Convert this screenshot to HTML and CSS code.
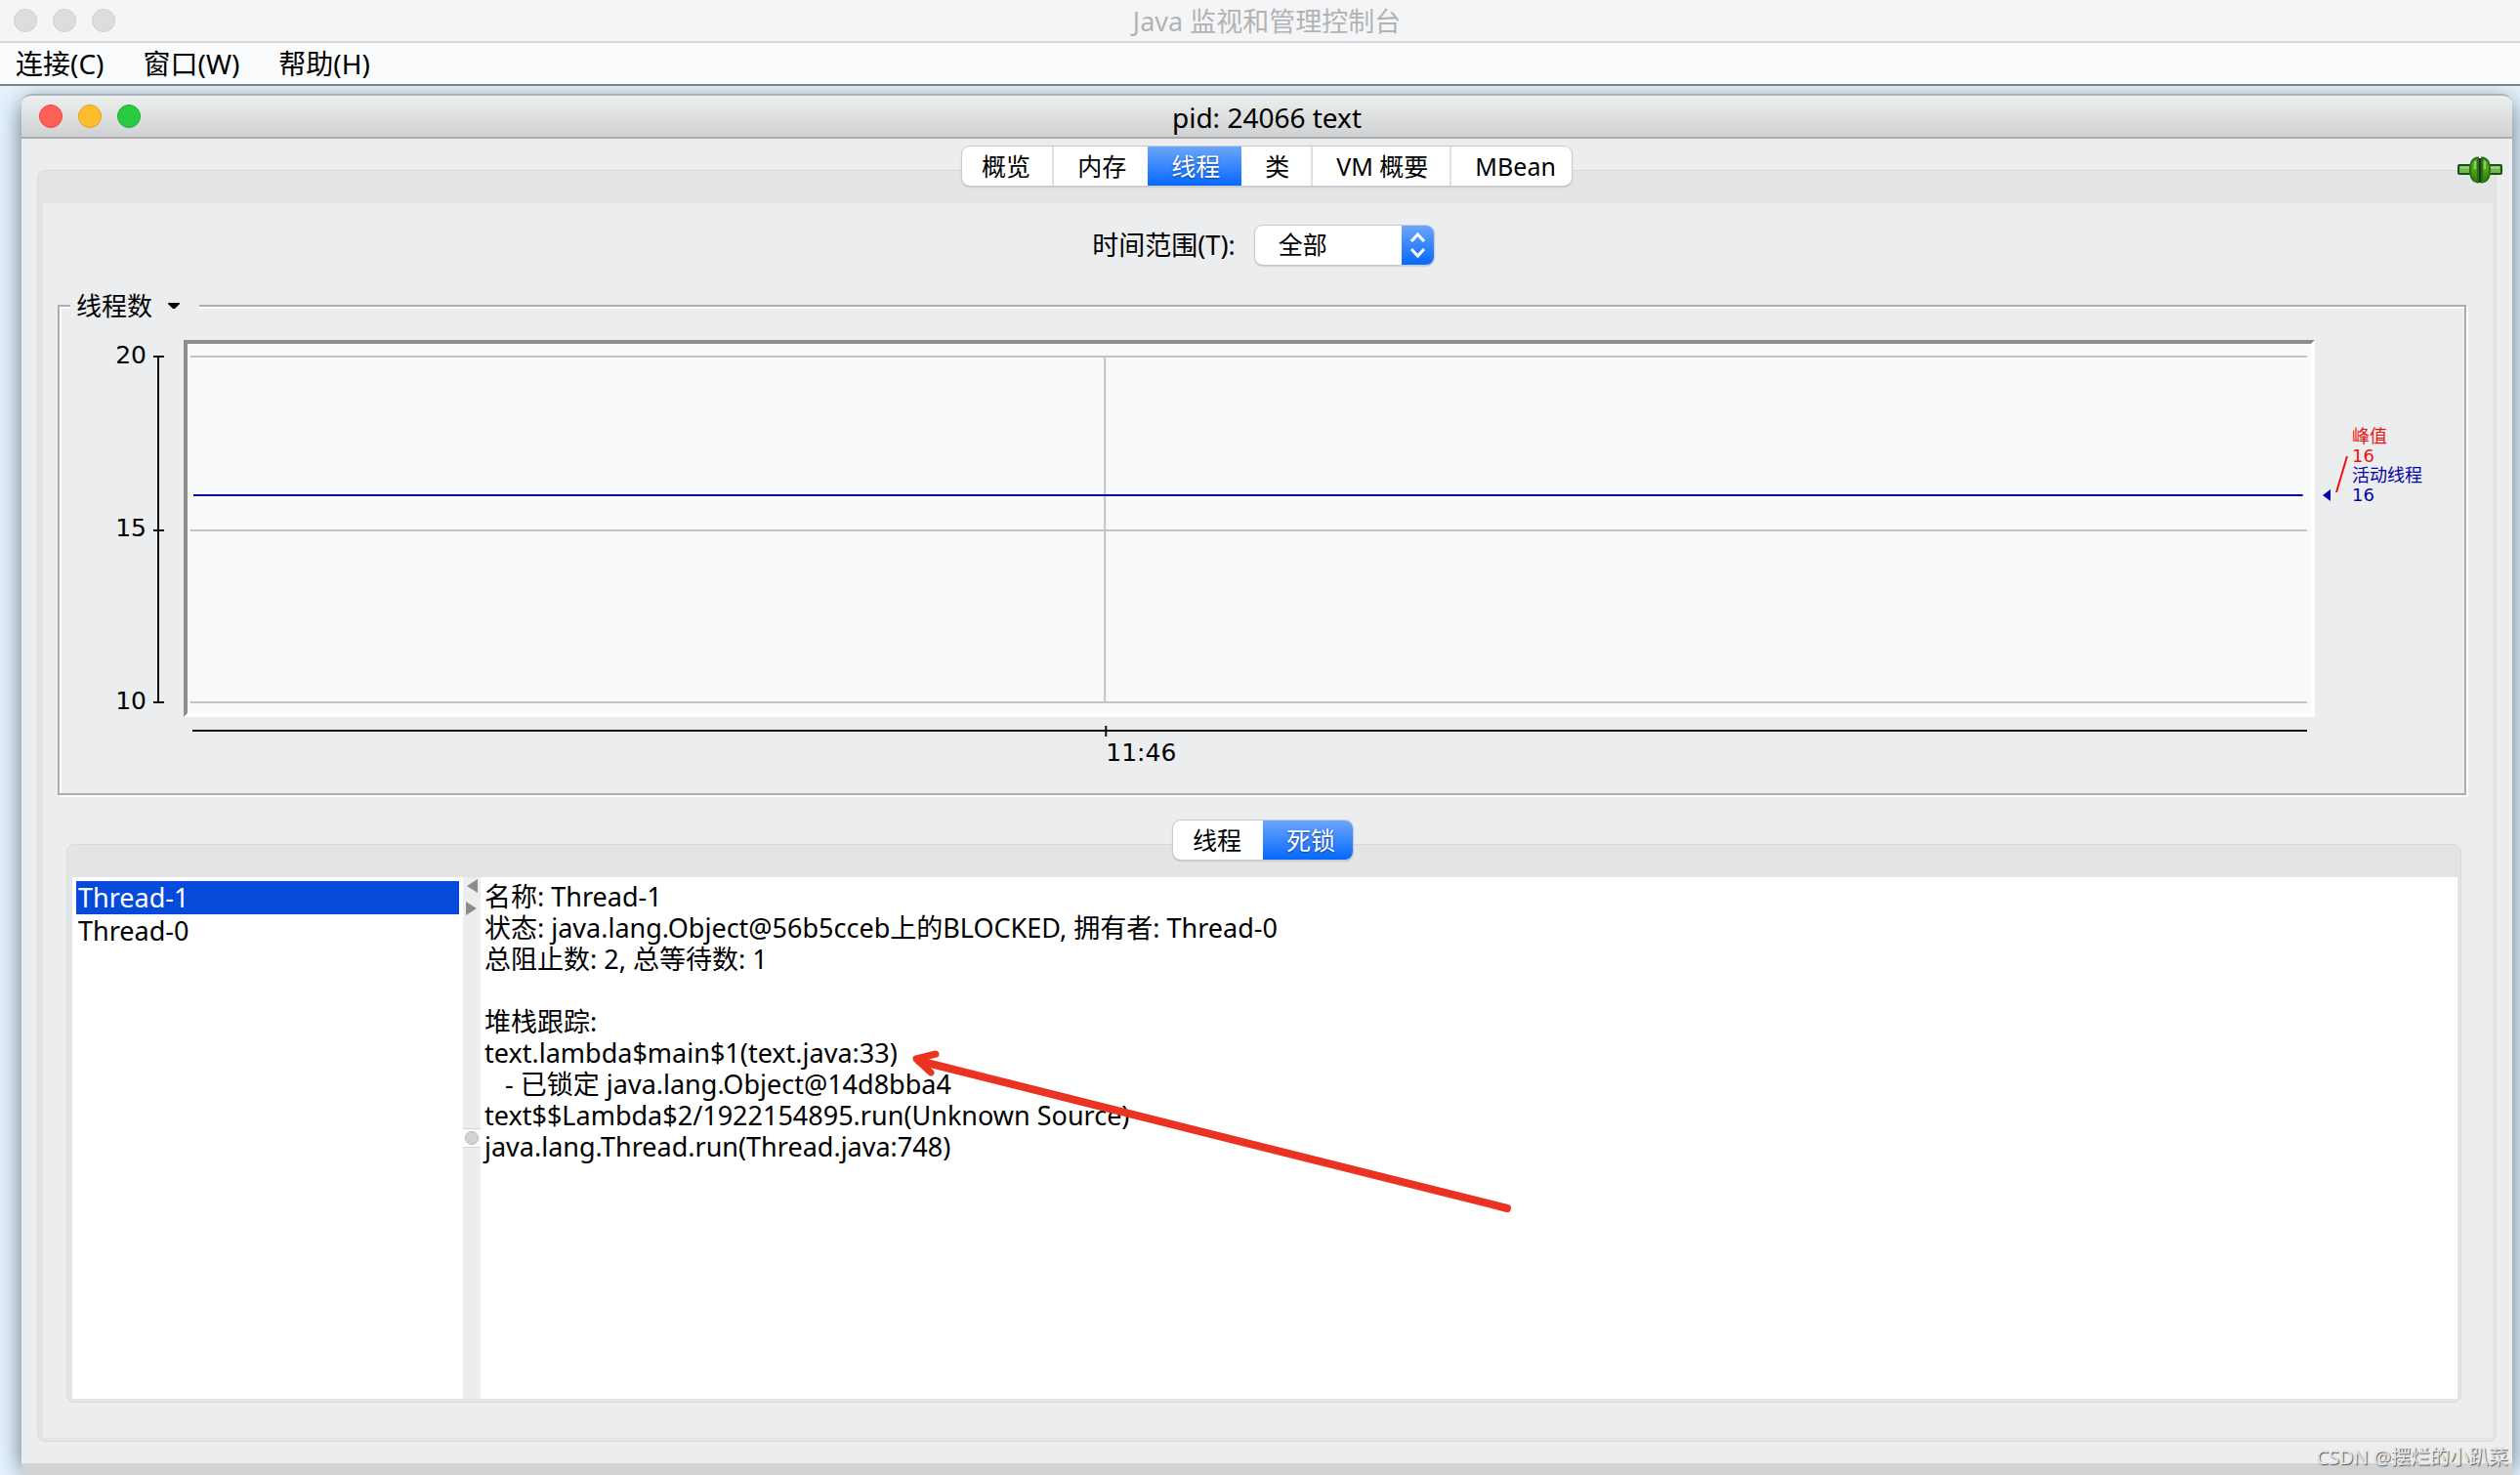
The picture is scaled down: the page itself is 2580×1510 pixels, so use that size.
FILE: index.html
```html
<!DOCTYPE html>
<html lang="zh-CN">
<head>
<meta charset="utf-8">
<meta name="viewport" content="width=device-width, initial-scale=1">
<title>Java 监视和管理控制台</title>
<link rel="stylesheet" href="styles.css">
</head>
<body>
<header class="app-title">
  <div class="lights">
    <span class="light"></span><span class="light"></span><span class="light"></span>
  </div>
  <h1 class="app-name">Java 监视和管理控制台</h1>
</header>
<nav class="menubar">
  <button class="menu" type="button">连接(C)</button>
  <button class="menu" type="button">窗口(W)</button>
  <button class="menu" type="button">帮助(H)</button>
</nav>
<main class="desktop">
  <section class="window">
    <header class="window-title">
      <div class="lights">
        <span class="light light-close"></span><span class="light light-min"></span><span class="light light-max"></span>
      </div>
      <h2 class="window-name">pid: 24066 text</h2>
    </header>
    <div class="window-body">
      <svg class="plug" width="46" height="28" viewBox="0 0 46 28" aria-label="已连接">
        <defs>
          <linearGradient id="plugFill" x1="0" y1="0" x2="0" y2="1">
            <stop offset="0" stop-color="#5fa83a"/><stop offset="0.5" stop-color="#4da513"/><stop offset="1" stop-color="#2e7a10"/>
          </linearGradient>
        </defs>
        <rect x="1" y="9" width="13" height="9" rx="1" fill="#6fb84e" stroke="#17530c" stroke-width="2"/>
        <rect x="32" y="9" width="13" height="9" rx="1" fill="#6fb84e" stroke="#17530c" stroke-width="2"/>
        <path d="M3 11.500H13M33 11.500H43" stroke="#a4d58c" stroke-width="2"/>
        <path d="M21 1.500C15 2 13 6 13 13.500S15 26 21 26.500Z" fill="url(#plugFill)" stroke="#2c6e1b" stroke-width="2"/>
        <path d="M25 1.500C31 2 33 6 33 13.500S31 26 25 26.500Z" fill="url(#plugFill)" stroke="#2c6e1b" stroke-width="2"/>
        <path d="M23 2V27" stroke="#123f0a" stroke-width="2"/>
        <path d="M18 5V13M28 5V13" stroke="#8fcb6a" stroke-width="2"/>
      </svg>
      <div class="tabs" role="tablist">
        <button class="tab tab-overview" type="button" role="tab">概览</button>
        <button class="tab" type="button" role="tab">内存</button>
        <button class="tab tab-on" type="button" role="tab" aria-selected="true">线程</button>
        <button class="tab" type="button" role="tab">类</button>
        <button class="tab" type="button" role="tab">VM 概要</button>
        <button class="tab" type="button" role="tab">MBean</button>
      </div>
      <div class="panel">
        <div class="page">
          <div class="range">
            <label for="range">时间范围(T):</label>
            <div class="combo">
              <select class="combo-select" id="range"><option>全部</option></select>
              <svg class="combo-arrows" width="33" height="40" viewBox="0 0 33 40" aria-hidden="true">
                <path d="M10 16L16.500 9L23 16M10 24L16.500 31L23 24" fill="none" stroke="#fff" stroke-width="3"/>
              </svg>
            </div>
          </div>
          <fieldset class="chart">
            <legend class="chart-legend">
              <button class="chart-toggle" type="button">线程数
                <svg width="12" height="7" viewBox="0 0 12 7" aria-hidden="true"><path d="M0 0H12V1L7 6H5L0 1Z"/></svg>
              </button>
            </legend>
            <div class="chart-grid">
              <div class="y-labels"><span>20</span><span>15</span><span>10</span></div>
              <svg class="y-axis" aria-hidden="true">
                <path d="M5 1V355M0 1H11M0 179H11M0 355H11" fill="none" stroke="#111" stroke-width="2"/>
              </svg>
              <svg class="plot" role="img" aria-label="线程数: 活动线程 16, 峰值 16">
                <g stroke="#c3c4c6" stroke-width="2">
                  <line x1="0" y1="13" x2="100%" y2="13"/>
                  <line x1="0" y1="191" x2="100%" y2="191"/>
                  <line x1="0" y1="367" x2="100%" y2="367"/>
                  <line x1="43.200%" y1="13" x2="43.200%" y2="367"/>
                </g>
                <line x1="3" y1="155" x2="99.800%" y2="155" stroke="#0303a8" stroke-width="2"/>
              </svg>
              <div class="legend-area">
                <svg class="legend-marks" width="28" height="50" viewBox="0 0 28 50" aria-hidden="true">
                  <path d="M0 41L8 35V47Z" fill="#0303a8"/>
                  <path d="M14 38L25 1" stroke="#f01010" stroke-width="2"/>
                </svg>
                <div class="legend-text">
                  <div class="peak">峰值<br>16</div>
                  <div class="live">活动线程<br>16</div>
                </div>
              </div>
              <div class="x-axis">
                <svg class="x-line" aria-hidden="true">
                  <line x1="0" y1="5" x2="100%" y2="5" stroke="#111" stroke-width="2"/>
                  <line x1="43.200%" y1="0" x2="43.200%" y2="11" stroke="#111" stroke-width="2"/>
                </svg>
                <span class="x-label">11:46</span>
              </div>
            </div>
          </fieldset>
          <div class="tabs tabs-threads" role="tablist">
            <button class="tab" type="button" role="tab">线程</button>
            <button class="tab tab-on" type="button" role="tab" aria-selected="true">死锁</button>
          </div>
          <div class="panel panel-threads">
            <div class="split">
              <ul class="threads" role="listbox" aria-label="死锁">
                <li class="thread thread-on" role="option" aria-selected="true">Thread-1</li>
                <li class="thread" role="option">Thread-0</li>
              </ul>
              <div class="divider">
                <svg width="12" height="38" viewBox="0 0 12 38" aria-hidden="true">
                  <path d="M12 0V14L1 7ZM0 23V37L11 30Z" fill="#8a8b8d"/>
                </svg>
                <span class="grip"></span>
              </div>
              <div class="detail">
                <p class="trace">名称: Thread-1
状态: java.lang.Object@56b5cceb上的BLOCKED, 拥有者: Thread-0
总阻止数: 2, 总等待数: 1

堆栈跟踪:
text.lambda$main$1(text.java:33)
   - 已锁定 java.lang.Object@14d8bba4
text$$Lambda$2/1922154895.run(Unknown Source)
java.lang.Thread.run(Thread.java:748)</p>
                <svg class="pointer" width="620" height="176" viewBox="0 0 620 176" aria-hidden="true">
                  <path d="M610 164L8 13" stroke="#ea3323" stroke-width="8" stroke-linecap="round"/>
                  <path d="M25 6L5 11L20 25" fill="none" stroke="#ea3323" stroke-width="7" stroke-linecap="round" stroke-linejoin="round"/>
                </svg>
              </div>
            </div>
          </div>
        </div>
      </div>
    </div>
  </section>
  <div class="desktop-edge"></div>
  <span class="watermark">CSDN @摆烂的小趴菜</span>
</main>
</body>
</html>
```
FILE: styles.css
```css
* { box-sizing: border-box; }

body {
  display: flex;
  flex-direction: column;
  min-height: 100vh;
  margin: 0;
  background: #e6f3ff;
  color: #000;
  font-family: "Noto Sans", "Noto Sans CJK SC", sans-serif;
  font-size: 27px;
  line-height: 32px;
}

button, select { font: inherit; color: inherit; }
button { border: 0; background: none; padding: 0; }
svg { display: block; }

/* Title bars */
.app-title, .window-title {
  display: grid;
  grid-template-columns: 1fr auto 1fr;
  align-items: center;
}
.app-title {
  height: 44px;
  padding-left: 14px;
  background: #f4f5f7;
  border-bottom: 2px solid #d4d5d7;
}
.app-name, .window-name {
  margin: 0;
  padding-top: 2px;
  font-size: 27px;
  font-weight: 400;
}
.app-name { color: #b2b3b5; }
.window-name { padding-right: 18px; font-size: 28px; }

.lights { display: flex; gap: 16px; }
.light {
  width: 24px;
  height: 24px;
  border: 1px solid #cfd0d1;
  border-radius: 50%;
  background: #dcddde;
}
.light-close { background: #ff5f57; border-color: #e2463f; }
.light-min { background: #ffbd2e; border-color: #e0a023; }
.light-max { background: #28cb41; border-color: #1dac2c; }

.menubar {
  display: flex;
  gap: 40px;
  height: 44px;
  padding: 0 16px;
  background: #fafbfc;
  border-bottom: 2px solid #7f8387;
  font-size: 28px;
}

/* Inner frame */
.desktop {
  position: relative;
  flex: 1;
  display: flex;
  flex-direction: column;
  padding: 8px 8px 0 22px;
  overflow: hidden;
}
.window {
  flex: 1;
  display: flex;
  flex-direction: column;
  border-radius: 10px 10px 0 0;
  background: #ecedef;
  box-shadow: 0 8px 24px rgba(40, 60, 70, 0.7);
}
.window-title {
  height: 46px;
  padding-left: 18px;
  border-top: 2px solid #abb3bb;
  border-bottom: 2px solid #abacae;
  border-radius: 10px 10px 0 0;
  background: linear-gradient(#edeeee, #d0d1d2);
}
.desktop-edge { position: relative; height: 12px; background: #d1d2d4; }
.window-body {
  position: relative;
  flex: 1;
  display: flex;
  flex-direction: column;
  padding: 8px 16px 22px;
}
.plug { position: absolute; top: 18px; right: 10px; z-index: 1; }

/* Segmented tabs straddling the panel edge */
.tabs {
  z-index: 1;
  align-self: center;
  display: flex;
  height: 40px;
  margin-bottom: -16px;
  border-radius: 8px;
  background: #fff;
  box-shadow: 0 0 0 1px #c9cacb, 0 1px 2px #88898b;
  font-size: 25px;
}
.tab {
  padding: 0 22px 0 24px;
  border-left: 2px solid #dfe0e1;
}
.tab-overview { padding-left: 20px; }
.tab:first-child, .tab-on, .tab-on + .tab { border-left: 0; }
.tab:last-child { padding-right: 16px; border-radius: 0 8px 8px 0; }
.tab-on {
  background: linear-gradient(#6ba6fb, #0568fe);
  color: #fff;
  text-shadow: 0 1px 2px #0d3f90;
}

.panel {
  flex: 1;
  display: flex;
  padding: 33px 3px 3px 5px;
  border: 1px solid #d9dadc;
  border-radius: 8px;
  background: #e3e4e6;
}
.page {
  flex: 1;
  display: flex;
  flex-direction: column;
  padding: 23px 25px 36px 15px;
  background: #ecedef;
}

/* Time range */
.range { display: flex; justify-content: center; align-items: center; gap: 20px; }
.combo { position: relative; display: flex; }
.combo-select {
  width: 183px;
  height: 40px;
  padding: 0 24px 2px;
  border: 0;
  border-radius: 8px;
  appearance: none;
  background: #fff;
  box-shadow: 0 0 0 1px #c9cacb, 0 1px 2px #88898b;
  font-size: 25px;
}
.combo-arrows {
  position: absolute;
  top: 0;
  right: 0;
  border-radius: 0 8px 8px 0;
  background: linear-gradient(#6ba6fb, #0568fe);
  pointer-events: none;
}

/* Chart */
.chart {
  min-width: 0;
  margin: 26px 2px 0 0;
  padding: 19px 0 25px;
  border: 2px solid #acadaf;
  box-shadow: inset 2px 2px #fff, 2px 2px #fff;
}
.chart-legend { margin-left: 11px; padding: 0; background: #ecedef; }
.chart-toggle { display: flex; align-items: center; gap: 16px; padding: 0 20px 0 6px; font-size: 26px; }
.chart-grid {
  display: grid;
  grid-template-columns: 89px 38px minmax(0, 1fr) 153px;
}
.y-labels {
  display: flex;
  flex-direction: column;
  justify-content: space-between;
  height: 386px;
  text-align: right;
}
.y-axis { width: 11px; height: 356px; margin: 16px 0 0 7px; }
.y-labels, .x-label, .legend-text { font-family: "DejaVu Sans", "Noto Sans CJK SC", sans-serif; }
.y-labels, .x-label { font-size: 25px; }
.plot {
  width: 100%;
  height: 386px;
  padding: 0 4px 0 3px;
  border: 4px solid #8c8d8f;
  border-right-color: #fff;
  border-bottom-color: #fff;
  background: #f9fafc;
}
.legend-area { display: flex; gap: 2px; padding: 89px 0 0 8px; }
.legend-marks { margin-top: 29px; }
.legend-text { font-size: 18px; line-height: 20px; white-space: nowrap; }
.peak { color: #f01010; }
.live { color: #0303a8; }
.x-axis { grid-column: 3; margin: 9px 8px 0 9px; }
.x-line { width: 100%; height: 11px; }
.x-label { display: block; margin-left: 43.2%; padding-top: 1px; }

/* Threads */
.tabs-threads { margin-top: 26px; }
.tabs-threads .tab { padding: 0 22px 0 20px; }
.tabs-threads .tab-on { padding: 0 18px 0 24px; }
.panel-threads { margin: 0 7px 0 9px; }
.split {
  flex: 1;
  display: grid;
  grid-template-columns: 400px 18px minmax(0, 1fr);
  background: #fff;
}
.threads { margin: 0; padding: 4px; list-style: none; }
.thread { padding: 1px 2px; }
.thread-on { background: #064adb; color: #fff; }
.divider {
  display: flex;
  flex-direction: column;
  align-items: center;
  padding-top: 2px;
  background: #ecedef;
}
.grip {
  display: flex;
  justify-content: center;
  align-items: center;
  width: 18px;
  height: 20px;
  margin-top: 217px;
  border: solid #d4d5d7;
  border-width: 1px 0;
  background: #fafbfc;
}
.grip::before {
  content: "";
  width: 12px;
  height: 12px;
  border: 1px solid #b4b5b7;
  border-radius: 50%;
  background: #d2d3d5;
}
.detail { position: relative; padding: 4px; }
.trace { margin: 0; white-space: pre-wrap; }
.pointer { position: absolute; left: 441px; top: 175px; }

.watermark {
  position: absolute;
  right: 12px;
  bottom: 3px;
  color: #e4e5e6;
  font-size: 20px;
  line-height: 30px;
  text-shadow: 1px 1px 1px #555;
}
```
